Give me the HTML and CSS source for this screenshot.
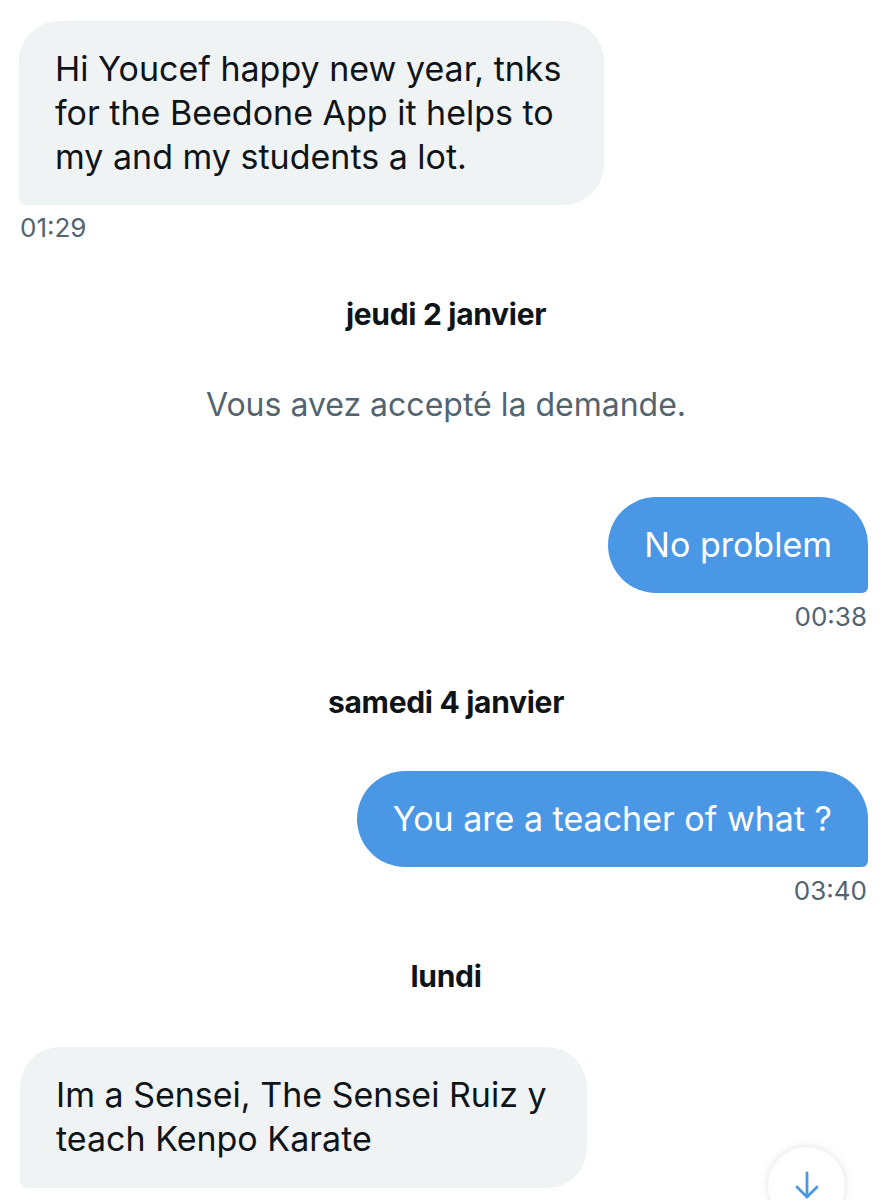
FILE: index.html
```html
<!DOCTYPE html>
<html lang="fr">
<head>
	<meta charset="UTF-8">
	<meta name="viewport" content="width=device-width, initial-scale=1.0">
	<title>Messages</title>
<link rel="stylesheet" href="styles.css">
</head>
<body>

<div class="chat">
	<div class="msg msgIn">Hi Youcef happy new year, tnks for the Beedone App it helps to my and my students a lot.</div>
	<div class="time">01:29</div>

	<div class="day day1">jeudi 2 janvier</div>
	<div class="note">Vous avez accepté la demande.</div>

	<div class="msg msgOut out1">No problem</div>
	<div class="time timeOut">00:38</div>

	<div class="day">samedi 4 janvier</div>

	<div class="msg msgOut out2">You are a teacher of what ?</div>
	<div class="time timeOut">03:40</div>

	<div class="day">lundi</div>

	<div class="msg msgIn in2">Im a Sensei, The Sensei Ruiz y teach Kenpo Karate</div>

	<!-- bouton retour en bas -->
	<div class="downBtn">
		<svg width="30" height="30" viewBox="0 0 30 30" fill="none" stroke="#4a97e5" stroke-width="2.8" stroke-linecap="round" stroke-linejoin="round">
			<path d="M15 3 V27"/>
			<path d="M5 17 L15 27 L25 17"/>
		</svg>
	</div>
</div>

</body>
</html>
```

FILE: styles.css
```css
/* base */
*{
	margin: 0;
	padding: 0;
	box-sizing: border-box;
}

body{
	background: #ffffff;
	font-family: "Inter", "Liberation Sans", sans-serif;
	color: #0f1419;
	overflow: hidden;
}

.chat{
	position: relative;
	height: 1200px;
	padding: 21px 20px 0 19px;
	display: flex;
	flex-direction: column;
}

/* bulles */
.msg{
	font-size: 34px;
	line-height: 44px;
	padding: 26px 36px;
	width: fit-content;
	max-width: 585px;
}

.msgIn{
	background: #eff3f4;
	color: #0f1419;
	border-radius: 40px 40px 40px 6px;
	align-self: flex-start;
}

.in2{
	margin-top: 56px;
	padding-bottom: 27px;
	margin-left: 1px;
	max-width: 567px;
}

.msgOut{
	background: #4a97e5;
	color: #ffffff;
	border-radius: 48px 48px 6px 48px;
	align-self: flex-end;
}

.out1{
	margin-top: 74px;
}

.out2{
	margin-top: 54px;
}

/* heures */
.time{
	font-size: 26px;
	line-height: 30px;
	color: #536471;
	margin-top: 8px;
	margin-left: 1px;
}

.timeOut{
	align-self: flex-end;
	margin-top: 9px;
	margin-right: 1px;
}

/* dates */
.day{
	font-size: 30px;
	line-height: 30px;
	font-weight: 700;
	letter-spacing: -0.3px;
	text-align: center;
	margin-top: 55px;
	padding-left: 5px;
}

.day1{
	margin-top: 56px;
}

.note{
	font-size: 32px;
	line-height: 36px;
	color: #536471;
	text-align: center;
	margin-top: 58px;
	padding-left: 5px;
}

/* bouton flottant */
.downBtn{
	position: absolute;
	left: 768px;
	top: 1147px;
	width: 77px;
	height: 77px;
	border-radius: 50%;
	background: #ffffff;
	box-shadow: 0 0 10px rgba(0, 0, 0, 0.12);
	display: flex;
	justify-content: center;
	padding-top: 23px;
}
```
